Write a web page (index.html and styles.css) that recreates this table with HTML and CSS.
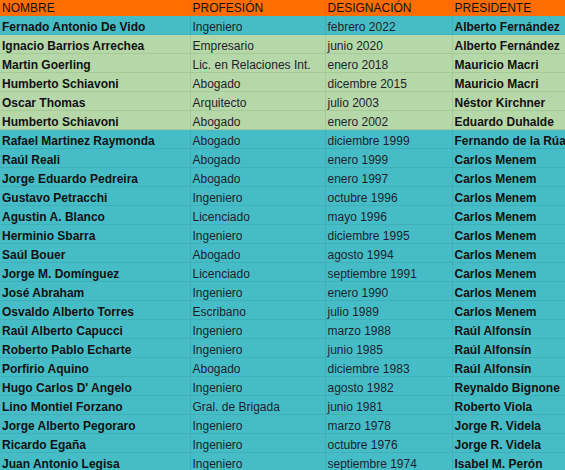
FILE: index.html
```html
<!DOCTYPE html>
<html lang="es">
<head>
<meta charset="utf-8">
<title>Designaciones</title>
<link rel="stylesheet" href="styles.css">
</head>
<body>
<table class="sheet">
  <colgroup>
    <col class="c1"><col class="c2"><col class="c3"><col class="c4">
  </colgroup>
  <thead>
    <tr class="head"><th>NOMBRE</th><th>PROFESIÓN</th><th>DESIGNACIÓN</th><th>PRESIDENTE</th></tr>
  </thead>
  <tbody>
    <tr class="teal"><td class="b">Fernado Antonio De Vido</td><td>Ingeniero</td><td>febrero 2022</td><td class="b">Alberto Fernández</td></tr>
    <tr class="green"><td class="b">Ignacio Barrios Arrechea</td><td>Empresario</td><td>junio 2020</td><td class="b">Alberto Fernández</td></tr>
    <tr class="green"><td class="b">Martin Goerling</td><td>Lic. en Relaciones Int.</td><td>enero 2018</td><td class="b">Mauricio Macri</td></tr>
    <tr class="green"><td class="b">Humberto Schiavoni</td><td>Abogado</td><td>dicembre 2015</td><td class="b">Mauricio Macri</td></tr>
    <tr class="green"><td class="b">Oscar Thomas</td><td>Arquitecto</td><td>julio 2003</td><td class="b">Néstor Kirchner</td></tr>
    <tr class="green"><td class="b">Humberto Schiavoni</td><td>Abogado</td><td>enero 2002</td><td class="b">Eduardo Duhalde</td></tr>
    <tr class="teal"><td class="b">Rafael Martinez Raymonda</td><td>Abogado</td><td>diciembre 1999</td><td class="b">Fernando de la Rúa</td></tr>
    <tr class="teal"><td class="b">Raúl Reali</td><td>Abogado</td><td>enero 1999</td><td class="b">Carlos Menem</td></tr>
    <tr class="teal"><td class="b">Jorge Eduardo Pedreira</td><td>Abogado</td><td>enero 1997</td><td class="b">Carlos Menem</td></tr>
    <tr class="teal"><td class="b">Gustavo Petracchi</td><td>Ingeniero</td><td>octubre 1996</td><td class="b">Carlos Menem</td></tr>
    <tr class="teal"><td class="b">Agustin A. Blanco</td><td>Licenciado</td><td>mayo 1996</td><td class="b">Carlos Menem</td></tr>
    <tr class="teal"><td class="b">Herminio Sbarra</td><td>Ingeniero</td><td>diciembre 1995</td><td class="b">Carlos Menem</td></tr>
    <tr class="teal"><td class="b">Saúl Bouer</td><td>Abogado</td><td>agosto 1994</td><td class="b">Carlos Menem</td></tr>
    <tr class="teal"><td class="b">Jorge M. Domínguez</td><td>Licenciado</td><td>septiembre 1991</td><td class="b">Carlos Menem</td></tr>
    <tr class="teal"><td class="b">José Abraham</td><td>Ingeniero</td><td>enero 1990</td><td class="b">Carlos Menem</td></tr>
    <tr class="teal"><td class="b">Osvaldo Alberto Torres</td><td>Escribano</td><td>julio 1989</td><td class="b">Carlos Menem</td></tr>
    <tr class="teal"><td class="b">Raúl Alberto Capucci</td><td>Ingeniero</td><td>marzo 1988</td><td class="b">Raúl Alfonsín</td></tr>
    <tr class="teal"><td class="b">Roberto Pablo Echarte</td><td>Ingeniero</td><td>junio 1985</td><td class="b">Raúl Alfonsín</td></tr>
    <tr class="teal"><td class="b">Porfirio Aquino</td><td>Abogado</td><td>diciembre 1983</td><td class="b">Raúl Alfonsín</td></tr>
    <tr class="teal"><td class="b">Hugo Carlos D' Angelo</td><td>Ingeniero</td><td>agosto 1982</td><td class="b">Reynaldo Bignone</td></tr>
    <tr class="teal"><td class="b">Lino Montiel Forzano</td><td>Gral. de Brigada</td><td>junio 1981</td><td class="b">Roberto Viola</td></tr>
    <tr class="teal"><td class="b">Jorge Alberto Pegoraro</td><td>Ingeniero</td><td>marzo 1978</td><td class="b">Jorge R. Videla</td></tr>
    <tr class="teal"><td class="b">Ricardo Egaña</td><td>Ingeniero</td><td>octubre 1976</td><td class="b">Jorge R. Videla</td></tr>
    <tr class="teal"><td class="b">Juan Antonio Legisa</td><td>Ingeniero</td><td>septiembre 1974</td><td class="b">Isabel M. Perón</td></tr>
  </tbody>
</table>
</body>
</html>
```
FILE: styles.css
```css
html, body {
  margin: 0;
  padding: 0;
  background: #46bdc6;
  overflow: hidden;
}
.sheet {
  border-collapse: collapse;
  table-layout: fixed;
  width: 565px;
  font-family: "Liberation Sans", Arial, sans-serif;
  font-size: 12px;
  color: #1e1e2e;
}
.c1 { width: 190px; }
.c2 { width: 135px; }
.c3 { width: 127px; }
.c4 { width: 113px; }
.sheet th, .sheet td {
  padding: 0 0 0 2px;
  text-align: left;
  white-space: nowrap;
  overflow: hidden;
}
.head th {
  background: #ff6d01;
  font-weight: normal;
  color: #111;
  height: 16px;
  line-height: 16px;
  border-right: 1px solid #f0690a;
}
.sheet td {
  height: 13px;
  line-height: 13px;
  padding-top: 5px;
  border-bottom: 1px solid #3fafb8;
  border-right: 1px solid #3fafb8;
}
.sheet td:last-child, .sheet th:last-child { border-right: none; }
.teal td { background: #46bdc6; border-color: #3fafb8; }
.green td { background: #b6d7a8; border-color: #a6c998; }
.b { font-weight: bold; color: #111; }
```
